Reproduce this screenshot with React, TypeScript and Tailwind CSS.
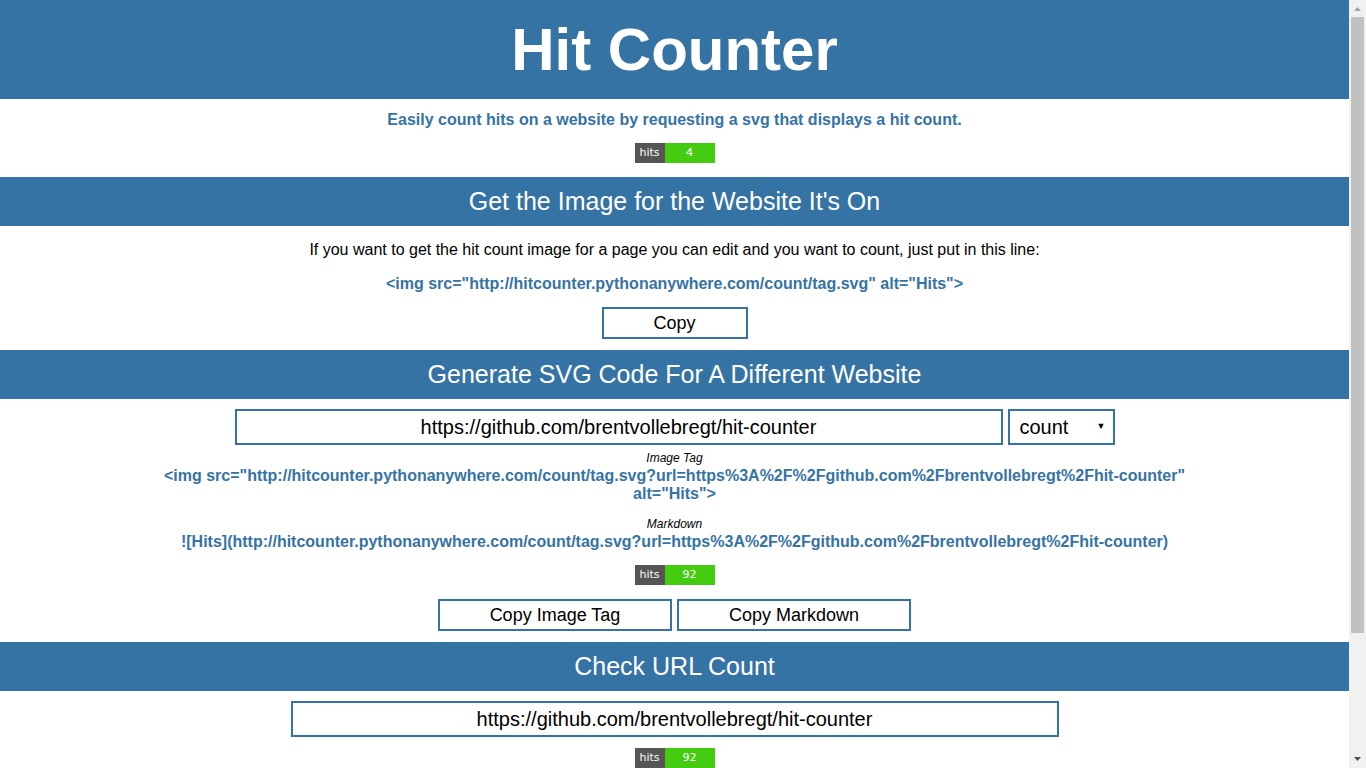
import { useState } from 'react';

const BLUE = '#3673a5';

const Badge = ({ count }: { count: number }) => (
  <div className="flex justify-center">
    <div className="flex h-[20px] text-[11px] text-white font-['DejaVu_Sans',sans-serif]">
      <span className="w-[30px] bg-[#555555] flex items-center justify-center">hits</span>
      <span className="w-[50px] bg-[#44cc11] flex items-center justify-center">{count}</span>
    </div>
  </div>
);

const SectionHeader = ({ title }: { title: string }) => (
  <div className="h-[49px] bg-[#3673a5] text-white text-[25px] flex items-center justify-center">
    {title}
  </div>
);

const OutlineButton = ({ label, width }: { label: string; width: string }) => (
  <button className={`${width} h-[32px] border-2 border-[#3673a5] bg-white text-[18px] text-black leading-none`}>
    {label}
  </button>
);

// the window's scrollbar, as it shows in the screenshot
const ScrollBar = () => (
  <div className="w-[17px] h-screen bg-[#f1f1f1] flex flex-col items-center shrink-0">
    <svg width="17" height="17" viewBox="0 0 17 17" className="shrink-0">
      <path d="M5 11 L8.5 7 L12 11 Z" fill="#a3a3a3" />
    </svg>
    <div className="w-[13px] h-[616px] bg-[#c1c1c1]" />
    <div className="flex-1" />
    <svg width="17" height="17" viewBox="0 0 17 17" className="shrink-0">
      <path d="M5 6 L8.5 10 L12 6 Z" fill="#505050" />
    </svg>
  </div>
);

export default function App() {
  const [url, setUrl] = useState('https://github.com/brentvollebregt/hit-counter');
  const [checkUrl, setCheckUrl] = useState('https://github.com/brentvollebregt/hit-counter');
  const [kind, setKind] = useState('count');

  const encoded = encodeURIComponent(url);
  const tagUrl = `http://hitcounter.pythonanywhere.com/${kind}/tag.svg?url=${encoded}`;

  return (
    <div className="h-screen flex overflow-hidden bg-white font-['Liberation_Sans',Arial,sans-serif] text-black">
      <div className="flex-1 overflow-y-auto [scrollbar-width:none]">
        <div className="min-h-[935px]">
          <header className="h-[99px] bg-[#3673a5] flex items-center justify-center">
            <h1 className="text-[60px] font-bold text-white leading-none">Hit Counter</h1>
          </header>

          <p className="mt-[12px] text-center text-[16px] leading-[18px] font-bold" style={{ color: BLUE }}>
            Easily count hits on a website by requesting a svg that displays a hit count.
          </p>
          <div className="mt-[14px] mb-[14px]">
            <Badge count={4} />
          </div>

          <SectionHeader title="Get the Image for the Website It's On" />
          <p className="mt-[15px] text-center text-[16px] leading-[18px]">
            If you want to get the hit count image for a page you can edit and you want to count, just put in this line:
          </p>
          <p className="mt-[16px] text-center text-[16px] leading-[18px] font-bold text-[#3673a5]">
            {'<img src="http://hitcounter.pythonanywhere.com/count/tag.svg" alt="Hits">'}
          </p>
          <div className="mt-[14px] mb-[11px] flex justify-center">
            <OutlineButton label="Copy" width="w-[146px]" />
          </div>

          <SectionHeader title="Generate SVG Code For A Different Website" />
          <div className="mt-[10px] flex justify-center gap-[5px]">
            <input
              value={url}
              onChange={(e) => setUrl(e.target.value)}
              className="w-[768px] h-[36px] border-2 border-[#3673a5] text-center text-[20px] outline-none"
            />
            <div className="relative w-[107px] h-[36px] border-2 border-[#3673a5] flex items-center pl-[10px] text-[20px]">
              <span>{kind}</span>
              <span className="absolute right-[7px] top-[9px] text-[9px]">▼</span>
              <select
                value={kind}
                onChange={(e) => setKind(e.target.value)}
                className="absolute inset-0 opacity-0"
              >
                <option value="count">count</option>
                <option value="nocount">nocount</option>
              </select>
            </div>
          </div>

          <p className="mt-[6px] text-center text-[12px] leading-[14px] italic">Image Tag</p>
          <p className="mx-auto mt-[2px] w-[1080px] text-center text-[16px] leading-[18px] font-bold text-[#3673a5] break-words">
            {`<img src="${tagUrl}" alt="Hits">`}
          </p>
          <p className="mt-[14px] text-center text-[12px] leading-[14px] italic">Markdown</p>
          <p className="mx-auto mt-[2px] w-[1080px] text-center text-[16px] leading-[18px] font-bold text-[#3673a5] break-words">
            {`![Hits](${tagUrl})`}
          </p>
          <div className="mt-[14px]">
            <Badge count={92} />
          </div>
          <div className="mt-[14px] mb-[11px] flex justify-center gap-[5px]">
            <OutlineButton label="Copy Image Tag" width="w-[234px]" />
            <OutlineButton label="Copy Markdown" width="w-[234px]" />
          </div>

          <SectionHeader title="Check URL Count" />
          <div className="mt-[10px] flex justify-center">
            <input
              value={checkUrl}
              onChange={(e) => setCheckUrl(e.target.value)}
              className="w-[768px] h-[36px] border-2 border-[#3673a5] text-center text-[20px] outline-none"
            />
          </div>
          <div className="mt-[11px] pb-[20px]">
            <Badge count={92} />
          </div>
        </div>
      </div>
      <ScrollBar />
    </div>
  );
}
